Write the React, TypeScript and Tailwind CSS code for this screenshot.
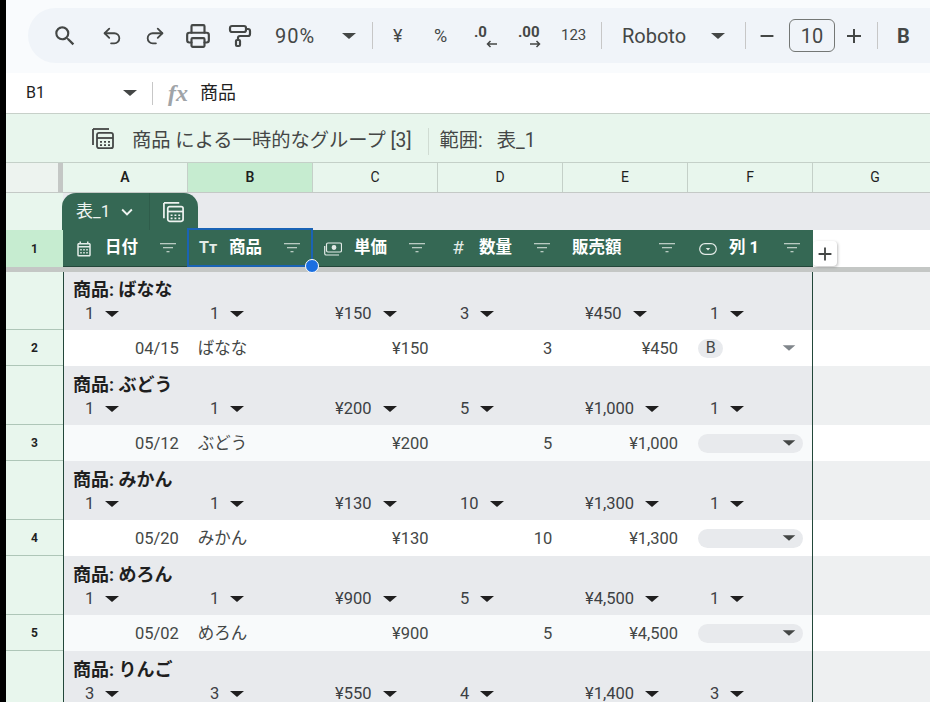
import { ReactNode } from "react";
import { MdSearch, MdAdd, MdRemove, MdKeyboardArrowDown, MdOutlineCalendarMonth } from "react-icons/md";
import { Undo2, Redo2, Printer, PaintRoller } from "lucide-react";

const FONT = "font-['Roboto','Noto_Sans_CJK_JP',sans-serif]";
const COLS = ["A", "B", "C", "D", "E", "F"];

type Group = {
  name: string;
  agg: string[];
};

type DataRow = {
  num: number;
  date: string;
  name: string;
  price: string;
  qty: string;
  total: string;
  chip?: string;
  alt?: boolean;
};

const ROWS: { group: Group; row?: DataRow }[] = [
  {
    group: { name: "ばなな", agg: ["1", "1", "¥150", "3", "¥450", "1"] },
    row: { num: 2, date: "04/15", name: "ばなな", price: "¥150", qty: "3", total: "¥450", chip: "B" },
  },
  {
    group: { name: "ぶどう", agg: ["1", "1", "¥200", "5", "¥1,000", "1"] },
    row: { num: 3, date: "05/12", name: "ぶどう", price: "¥200", qty: "5", total: "¥1,000", alt: true },
  },
  {
    group: { name: "みかん", agg: ["1", "1", "¥130", "10", "¥1,300", "1"] },
    row: { num: 4, date: "05/20", name: "みかん", price: "¥130", qty: "10", total: "¥1,300" },
  },
  {
    group: { name: "めろん", agg: ["1", "1", "¥900", "5", "¥4,500", "1"] },
    row: { num: 5, date: "05/02", name: "めろん", price: "¥900", qty: "5", total: "¥4,500", alt: true },
  },
  {
    group: { name: "りんご", agg: ["3", "3", "¥550", "4", "¥1,400", "3"] },
  },
];

function Caret({ className = "border-t-[#1f1f1f]" }: { className?: string }) {
  return (
    <span
      className={`inline-block w-0 h-0 border-x-[7px] border-x-transparent border-t-[6px] ${className}`}
    />
  );
}

function GroupIcon({ className }: { className?: string }) {
  return (
    <svg viewBox="0 0 24 24" fill="none" className={className}>
      <path d="M2 3v16" stroke="currentColor" strokeWidth="1.8" />
      <path d="M2 3h16" stroke="currentColor" strokeWidth="1.8" />
      <rect x="6" y="6.8" width="16" height="15.4" rx="2" stroke="currentColor" strokeWidth="1.8" />
      <path d="M6 12h16" stroke="currentColor" strokeWidth="1.8" />
      <path
        d="M9 15h2v1.8H9zM13 15h2v1.8h-2zM17 15h2v1.8h-2zM9 18.2h2V20H9zM13 18.2h2V20h-2zM17 18.2h2V20h-2z"
        fill="currentColor"
      />
    </svg>
  );
}

function FilterIcon() {
  return (
    <svg viewBox="0 0 16 10" className="w-[16px] h-[10px] text-[#b9cbc2]" fill="currentColor">
      <rect x="0" y="0" width="16" height="1.3" />
      <rect x="3" y="4" width="10" height="1.3" />
      <rect x="6.5" y="8" width="3" height="1.3" />
    </svg>
  );
}

function MoneyIcon() {
  return (
    <svg viewBox="0 0 18 14" fill="none" stroke="currentColor" strokeWidth="1.2" className="w-[18px] h-[14px]">
      <rect x="2.5" y="1" width="15" height="9" rx="1.5" />
      <circle cx="10" cy="5.5" r="1.8" fill="currentColor" />
      <path d="M0.7 4v7.5a1.5 1.5 0 0 0 1.5 1.5H15" />
    </svg>
  );
}

function ChipIcon() {
  return (
    <svg viewBox="0 0 18 12" fill="none" className="w-[18px] h-[12px]">
      <rect x="0.7" y="0.7" width="16.6" height="10.6" rx="5.3" stroke="currentColor" strokeWidth="1.2" />
      <path d="M6.8 5h4.4L9 7.4z" fill="currentColor" />
    </svg>
  );
}

function ArrowIcon({ left }: { left?: boolean }) {
  return (
    <svg viewBox="0 0 11 8" fill="none" stroke="currentColor" strokeWidth="1.5" className="w-[11px] h-[8px]">
      {left ? <path d="M11 4H1.5M4.5 1 1.5 4l3 3" /> : <path d="M0 4h9.5M6.5 1l3 3-3 3" />}
    </svg>
  );
}

function Sep() {
  return <div className="w-px h-[27px] bg-[#c7c7c7]" />;
}

function Toolbar() {
  return (
    <div className="h-[73px] bg-[#f9fbfd] pt-[8px] pl-[22px] shrink-0">
      <div className="h-[55px] bg-[#f0f4f9] rounded-l-[28px] flex items-center text-[#444746] overflow-hidden">
        <MdSearch className="w-[26px] h-[26px] shrink-0 ml-[24px]" />
        <Undo2 strokeWidth={2} className="w-[22px] h-[22px] shrink-0 ml-[23px]" />
        <Redo2 strokeWidth={2} className="w-[22px] h-[22px] shrink-0 ml-[21px]" />
        <Printer strokeWidth={2} className="w-[26px] h-[26px] shrink-0 ml-[19px]" />
        <PaintRoller strokeWidth={2.2} className="w-[24px] h-[24px] shrink-0 ml-[17px]" />
        <span className="text-[20px] w-[44px] ml-[23px] shrink-0 tracking-[1px]">90%</span>
        <span className="ml-[23px] shrink-0 flex">
          <Caret className="border-t-[#444746]" />
        </span>
        <div className="ml-[16px] shrink-0">
          <Sep />
        </div>
        <span className="ml-[20px] w-[14px] text-[18px] shrink-0">¥</span>
        <span className="ml-[27px] w-[18px] text-[18px] shrink-0">%</span>
        <div className="ml-[22px] w-[24px] h-[28px] relative shrink-0 text-[15px] font-bold leading-none">
          <span className="absolute left-0 top-[3px]">.0</span>
          <span className="absolute left-[12px] top-[18px] flex">
            <ArrowIcon left />
          </span>
        </div>
        <div className="ml-[20px] w-[24px] h-[28px] relative shrink-0 text-[15px] font-bold leading-none">
          <span className="absolute left-0 top-[3px]">.00</span>
          <span className="absolute left-[12px] top-[18px] flex">
            <ArrowIcon />
          </span>
        </div>
        <span className="ml-[19px] w-[26px] text-[15px] shrink-0">123</span>
        <div className="ml-[14px] shrink-0">
          <Sep />
        </div>
        <span className="ml-[20px] w-[66px] text-[20px] shrink-0">Roboto</span>
        <span className="ml-[23px] shrink-0 flex">
          <Caret className="border-t-[#444746]" />
        </span>
        <div className="ml-[20px] shrink-0">
          <Sep />
        </div>
        <MdRemove className="w-[22px] h-[22px] ml-[10px] shrink-0" />
        <div className="ml-[11px] w-[46px] h-[33px] border border-[#747775] rounded-[6px] shrink-0 flex items-center justify-center text-[20px]">
          10
        </div>
        <MdAdd className="w-[24px] h-[24px] ml-[7px] shrink-0" />
        <div className="ml-[11px] shrink-0">
          <Sep />
        </div>
        <span className="ml-[19px] text-[20px] font-bold shrink-0">B</span>
      </div>
    </div>
  );
}

function FormulaBar() {
  return (
    <div className="h-[41px] bg-white border-b border-[#c7d0c9] flex items-center shrink-0 text-[#1f1f1f]">
      <span className="ml-[20px] w-[97px] text-[16px]">B1</span>
      <Caret className="border-t-[#444746]" />
      <div className="ml-[15px] w-px h-[23px] bg-[#c7c7c7]" />
      <span className="ml-[15px] w-[32px] text-[24px] leading-none italic font-bold font-['Liberation_Serif',serif] text-[#a0a4a8]">
        fx
      </span>
      <span className="text-[18px] -mt-[2px]">商品</span>
    </div>
  );
}

function GroupBar() {
  return (
    <div className="h-[49px] bg-[#e8f6ed] border-b border-[#c4d0c8] flex items-center shrink-0 text-[#444746]">
      <GroupIcon className="ml-[85px] w-[24px] h-[24px]" />
      <span className="ml-[17px] mt-[6px] text-[19.3px] whitespace-nowrap">商品 による一時的なグループ [3]</span>
      <div className="ml-[16px] mt-[6px] w-px h-[27px] bg-[#d0dcd3]" />
      <span className="ml-[11px] mt-[6px] text-[19.3px] whitespace-nowrap">範囲:</span>
      <span className="ml-[14px] mt-[6px] text-[19.3px] whitespace-nowrap">表_1</span>
    </div>
  );
}

function ColumnHeaders() {
  return (
    <div className="h-[30px] flex shrink-0 border-b border-[#c4c9c6] bg-[#e8f6ed] text-[14px] text-[#1f1f1f]">
      <div className="w-[57px] shrink-0 bg-[#edf3ef] border-r-[5px] border-[#c4c7c5]" />
      {[...COLS, "G"].map((c) => (
        <div
          key={c}
          className={`w-[125px] shrink-0 flex items-center justify-center border-r border-[#c4d0c8] ${
            c === "B" ? "bg-[#c6ecd0] font-semibold" : c === "A" ? "font-semibold" : ""
          }`}
        >
          {c}
        </div>
      ))}
    </div>
  );
}

function RowHead({ label, className = "", h }: { label?: number | string; className?: string; h: string }) {
  return (
    <div
      className={`w-[57px] shrink-0 flex items-center justify-center text-[12px] font-bold text-[#1f1f1f] ${h} ${className}`}
    >
      {label}
    </div>
  );
}

function TabRow() {
  return (
    <div className="h-[37px] flex shrink-0 bg-[#e8eaed]">
      <RowHead h="h-[37px]" className="bg-[#e8f6ed]" />
      <div className="-ml-px w-[136px] h-[37px] bg-[#356854] rounded-t-[14px] flex items-center text-[#eef3f0]">
        <span className="ml-[14px] text-[17px]">表_1</span>
        <MdKeyboardArrowDown className="w-[22px] h-[22px] ml-[6px]" />
        <div className="ml-[11px] w-px h-[37px] bg-[#2f5d4b]" />
        <GroupIcon className="ml-[12px] w-[23px] h-[23px]" />
      </div>
    </div>
  );
}

function HeaderCell({ icon, label, selected }: { icon?: ReactNode; label: string; selected?: boolean }) {
  return (
    <div
      className={`relative shrink-0 flex items-center text-white ${
        selected
          ? "w-[126px] h-[39px] -mt-[2px] -ml-px -mr-px pt-[1px] border-2 border-[#1a63b5] z-10"
          : "w-[125px] h-[37px]"
      }`}
    >
      {icon ? (
        <span
          className={`mr-[12px] w-[18px] flex justify-center shrink-0 text-[#e3ebe7] ${
            selected ? "ml-[10px]" : "ml-[12px]"
          }`}
        >
          {icon}
        </span>
      ) : (
        <span className="ml-[10px]" />
      )}
      <span className="text-[16.5px] font-bold whitespace-nowrap">{label}</span>
      <span className={`absolute top-[13px] flex ${selected ? "right-[11px]" : "right-[12px]"}`}>
        <FilterIcon />
      </span>
      {selected && (
        <span className="absolute -right-[8px] -bottom-[8px] w-[14px] h-[14px] rounded-full bg-[#1a6fe0] border border-white" />
      )}
    </div>
  );
}

function HeaderRow() {
  return (
    <div className="h-[37px] flex shrink-0 bg-white relative">
      <RowHead label={1} h="h-[37px]" className="bg-[#c6ecd0]" />
      <div className="flex bg-[#356854] border-b border-[#23473a] w-[750px]">
        <HeaderCell icon={<MdOutlineCalendarMonth className="w-[18px] h-[18px]" />} label="日付" />
        <HeaderCell icon={<span className="text-[16px] font-bold whitespace-nowrap">Tт</span>} label="商品" selected />
        <HeaderCell icon={<MoneyIcon />} label="単価" />
        <HeaderCell icon={<span className="text-[19px]">#</span>} label="数量" />
        <HeaderCell label="販売額" />
        <HeaderCell icon={<ChipIcon />} label="列 1" />
      </div>
      <div className="absolute left-[807px] top-[11px] w-[24px] h-[25px] bg-white rounded-[4px] shadow-[1px_1px_3px_rgba(0,0,0,0.25)] flex items-center justify-center text-[#444746]">
        <MdAdd className="w-[22px] h-[22px]" />
      </div>
    </div>
  );
}

function GroupRow({ group, first }: { group: Group; first: boolean }) {
  return (
    <div className={`flex shrink-0 bg-[#eef0f1] ${first ? "h-[58px]" : "h-[59px]"}`}>
      <RowHead h={first ? "h-[58px]" : "h-[59px]"} className="bg-[#e8f6ed] border-b border-[#aec6b8]" />
      <div className="w-[750px] bg-[#e8eaed] border-x border-[#23473a] -mr-px text-[#3c4043]">
        <div
          className={`pl-[9px] text-[18px] leading-[26px] font-bold text-[#1f1f1f] ${
            first ? "h-[32px] pt-[5px]" : "h-[33px] pt-[6px]"
          }`}
        >
          商品: {group.name}
        </div>
        <div className="flex">
          {group.agg.map((v, i) => (
            <div key={i} className="w-[125px] shrink-0 flex items-center pl-[21px] h-[20px] text-[16.5px]">
              <span>{v}</span>
              <span className="ml-[11px] flex">
                <Caret />
              </span>
            </div>
          ))}
        </div>
      </div>
    </div>
  );
}

function DataLine({ row }: { row: DataRow }) {
  const bg = row.alt ? "bg-[#f8fafb]" : "bg-white";
  return (
    <div className="h-[36px] flex shrink-0 bg-white">
      <RowHead label={row.num} h="h-[36px]" className="bg-[#e8f6ed] border-b border-[#aec6b8]" />
      <div className={`w-[750px] h-[36px] flex border-x border-[#23473a] -mr-px text-[16.5px] text-[#444746] ${bg}`}>
        <div className="w-[124px] pr-[9px] text-right leading-[38px]">{row.date}</div>
        <div className="w-[125px] pl-[10px] leading-[38px]">{row.name}</div>
        <div className="w-[125px] pr-[9px] text-right leading-[38px]">{row.price}</div>
        <div className="w-[125px] pr-[10px] text-right leading-[38px]">{row.qty}</div>
        <div className="w-[125px] pr-[9px] text-right leading-[38px]">{row.total}</div>
        <div className="w-[125px] pl-[11px] flex items-center">
          {row.chip ? (
            <div className="w-[105px] flex items-center justify-between pr-[7px]">
              <span className="w-[25px] h-[19px] rounded-full bg-[#e8eaed] flex items-center justify-center text-[16px]">
                {row.chip}
              </span>
              <Caret className="border-t-[#80868b] scale-90" />
            </div>
          ) : (
            <div className="w-[105px] h-[19px] rounded-full bg-[#e8eaed] flex items-center justify-end pr-[7px]">
              <Caret className="border-t-[#444746] scale-90" />
            </div>
          )}
        </div>
      </div>
    </div>
  );
}

export default function App() {
  return (
    <div className={`w-[930px] h-[702px] overflow-hidden flex bg-white ${FONT}`}>
      <div className="w-[6px] shrink-0 bg-black" />
      <div className="flex-1 min-w-0 flex flex-col overflow-hidden">
        <Toolbar />
        <FormulaBar />
        <GroupBar />
        <ColumnHeaders />
        <TabRow />
        <HeaderRow />
        <div className="h-[5px] bg-[#c4c7c5] shrink-0" />
        {ROWS.map((r, i) => (
          <div key={r.group.name}>
            <GroupRow group={r.group} first={i === 0} />
            {r.row && <DataLine row={r.row} />}
          </div>
        ))}
      </div>
    </div>
  );
}
